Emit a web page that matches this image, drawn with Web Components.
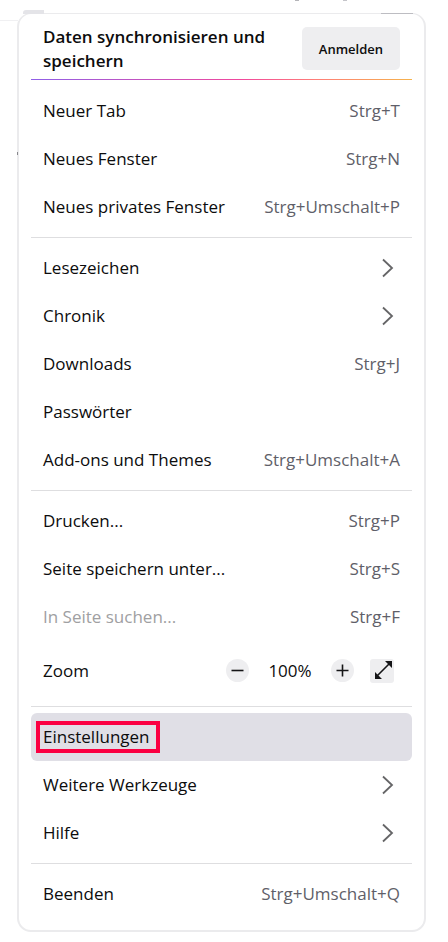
<!DOCTYPE html>
<html lang="de">
<head>
<meta charset="utf-8">
<meta name="viewport" content="width=device-width, initial-scale=1">
<title>Anwendungsmenü</title>
<style>
body { margin: 0; background: #fff; color: #0c0c0d; font: 17px/24px "Open Sans", "Noto Sans", sans-serif; }
</style>
</head>
<body>
<app-menu>
  <sync-header action="Anmelden">Daten synchronisieren und speichern</sync-header>
  <menu-section>
    <menu-entry keys="Strg+T">Neuer Tab</menu-entry>
    <menu-entry keys="Strg+N">Neues Fenster</menu-entry>
    <menu-entry keys="Strg+Umschalt+P">Neues privates Fenster</menu-entry>
  </menu-section>
  <menu-section>
    <menu-entry submenu>Lesezeichen</menu-entry>
    <menu-entry submenu>Chronik</menu-entry>
    <menu-entry keys="Strg+J">Downloads</menu-entry>
    <menu-entry>Passwörter</menu-entry>
    <menu-entry keys="Strg+Umschalt+A">Add-ons und Themes</menu-entry>
  </menu-section>
  <menu-section>
    <menu-entry keys="Strg+P">Drucken...</menu-entry>
    <menu-entry keys="Strg+S">Seite speichern unter...</menu-entry>
    <menu-entry keys="Strg+F" disabled>In Seite suchen...</menu-entry>
    <zoom-control value="100%">Zoom</zoom-control>
  </menu-section>
  <menu-section>
    <menu-entry selected>Einstellungen</menu-entry>
    <menu-entry submenu>Weitere Werkzeuge</menu-entry>
    <menu-entry submenu>Hilfe</menu-entry>
  </menu-section>
  <menu-section>
    <menu-entry keys="Strg+Umschalt+Q">Beenden</menu-entry>
  </menu-section>
</app-menu>
<script>
class MenuBase extends HTMLElement {
  render(html) { this.attachShadow({ mode: "open" }).innerHTML = html; }
}

customElements.define("app-menu", class extends MenuBase {
  connectedCallback() {
    this.render(`<style>
      :host { display: block; position: relative; padding: 13px 22px 10px 17px; }
      nav { display: block; border: 2px solid #ebebed; border-top-width: 1px; border-radius: 14px; padding: 0 12px 12px; background: #fff; }
      /* window edges that show behind the menu */
      i { position: absolute; background: #e4e4e8; }
      .tab { left: 23px; top: 10px; width: 21px; height: 4px; border-radius: 3px 0 0 0; }
      .bar { left: 0; top: 20px; width: 18px; height: 1px; background: #f0f0f2; }
      .edge { right: 35px; top: 13px; width: 32px; height: 1px; background: #bdbdc2; }
      .mark { left: 17px; top: 152px; width: 1px; height: 3px; background: #88888c; }
      .dot1 { left: 295px; top: 0; width: 4px; height: 1px; background: #b5b5b9; }
      .dot2 { left: 343px; top: 0; width: 4px; height: 1px; background: #c5c5ca; }
    </style>
    <nav><slot></slot></nav>
    <i class="tab"></i><i class="bar"></i><i class="edge"></i><i class="mark"></i><i class="dot1"></i><i class="dot2"></i>`);
  }
});

customElements.define("sync-header", class extends MenuBase {
  connectedCallback() {
    this.render(`<style>
      :host { display: block; margin-bottom: 7px; }
      header { display: flex; align-items: flex-start; justify-content: space-between; gap: 12px; padding: 11px 12px 6px; font-weight: 600; }
      button { margin-top: 2px; padding: 0 17px; height: 43px; flex: none; border: 0; border-radius: 5px; background: #eeeef0; color: inherit; font: 600 13px/20px "Open Sans", sans-serif; }
      div { height: 1px; background: linear-gradient(90deg, #8f5fe8, #f1489d 55%, #ff7f78 75%, #f6b34c); }
    </style>
    <header><span><slot></slot></span><button type="button">${this.getAttribute("action")}</button></header><div></div>`);
  }
});

customElements.define("menu-section", class extends MenuBase {
  connectedCallback() {
    this.render(`<style>
      :host { display: block; }
      :host(:not(:last-of-type)) { border-bottom: 1px solid #dedee0; padding-bottom: 6px; margin-bottom: 6px; }
    </style><slot></slot>`);
  }
});

customElements.define("menu-entry", class extends MenuBase {
  connectedCallback() {
    const keys = this.getAttribute("keys");
    const arrow = `<svg width="24" height="24" viewBox="0 0 24 24" aria-hidden="true"><path d="M7 3.5 16 12 7 20.5" fill="none" stroke="#656567" stroke-width="1.8"/></svg>`;
    this.render(`<style>
      :host { display: block; }
      button { display: flex; align-items: center; justify-content: space-between; width: 100%; height: 48px; padding: 0 12px; border: 0; border-radius: 6px; background: none; color: inherit; font: inherit; text-align: left; white-space: nowrap; }
      :host([disabled]) .label { color: #a0a0a2; }
      :host([selected]) button { background: #e0dfe6; padding-left: 5px; }
      :host([selected]) .label { border: 4px solid #fb0042; padding: 0 6px 0 3px; }
      .keys { color: #5f5f69; }
      svg { display: block; }
    </style>
    <button type="button" ${this.hasAttribute("disabled") ? "disabled" : ""}><span class="label"><slot></slot></span>${keys ? `<span class="keys">${keys}</span>` : ""}${this.hasAttribute("submenu") ? arrow : ""}</button>`);
  }
});

customElements.define("zoom-control", class extends MenuBase {
  connectedCallback() {
    this.render(`<style>
      :host { display: flex; align-items: center; justify-content: space-between; height: 59px; padding: 0 18px 0 12px; }
      div { display: flex; align-items: center; }
      button { display: grid; place-items: center; width: 23px; height: 23px; padding: 0; border: 0; border-radius: 50%; background: #eeeef0; color: #151517; }
      .full { width: 24px; height: 24px; margin-left: 16px; border-radius: 3px; }
      output { width: 82px; text-align: center; }
      svg { display: block; }
      path { fill: none; stroke: currentColor; stroke-width: 1.6; }
      .solid { fill: currentColor; stroke: none; }
    </style>
    <span><slot></slot></span>
    <div role="group" aria-label="Zoom">
      <button type="button" aria-label="Verkleinern"><svg width="23" height="23" viewBox="0 0 23 23"><path d="M5.5 11.5h12"/></svg></button>
      <output>${this.getAttribute("value")}</output>
      <button type="button" aria-label="Vergrößern"><svg width="23" height="23" viewBox="0 0 23 23"><path d="M5.5 11.5h12M11.5 5.5v12"/></svg></button>
      <button type="button" class="full" aria-label="Vollbild"><svg width="24" height="24" viewBox="0 0 24 24"><path d="M7 17 20 4"/><path class="solid" d="M15 2h7v7zM5 13v7h7z"/></svg></button>
    </div>`);
  }
});
</script>
</body>
</html>
